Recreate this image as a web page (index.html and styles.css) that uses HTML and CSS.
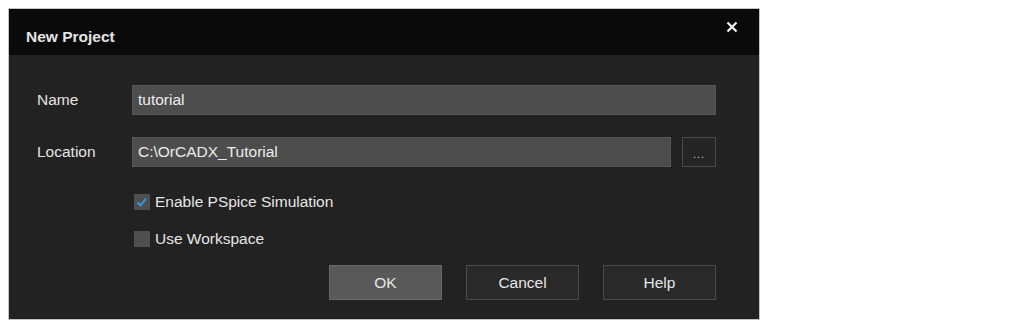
FILE: index.html
```html
<!DOCTYPE html>
<html lang="en">
<head>
    <meta charset="UTF-8">
    <title>New Project</title>
    <link rel="stylesheet" href="styles.css">
</head>
<body>
    <div class="dialog">
        <div class="title-bar">
            <span class="title">New Project</span>
            <span class="close">
                <svg width="12" height="12" viewBox="0 0 12 12">
                    <path d="M1.5 1.5 L10.5 10.5 M10.5 1.5 L1.5 10.5" stroke="#f2f2f2" stroke-width="2.2" fill="none"/>
                </svg>
            </span>
        </div>

        <div class="dialog-body">
            <div class="field">
                <label class="field-label">Name</label>
                <div class="input">tutorial</div>
            </div>
            <div class="field field-location">
                <label class="field-label">Location</label>
                <div class="input-group">
                    <div class="input">C:\OrCADX_Tutorial</div>
                    <button class="browse-btn">...</button>
                </div>
            </div>

            <div class="check-row check-first">
                <span class="checkbox checked">
                    <svg width="16" height="16" viewBox="0 0 16 16">
                        <path d="M3.5 8.5 L6.5 11.5 L12 4.5" stroke="#2f9be8" stroke-width="2" fill="none"/>
                    </svg>
                </span>
                <span class="check-label">Enable PSpice Simulation</span>
            </div>
            <div class="check-row">
                <span class="checkbox"></span>
                <span class="check-label">Use Workspace</span>
            </div>

            <div class="buttons">
                <button class="btn btn-default">OK</button>
                <button class="btn">Cancel</button>
                <button class="btn">Help</button>
            </div>
        </div>
    </div>
</body>
</html>
```

FILE: styles.css
```css
* {
    margin: 0;
    padding: 0;
    box-sizing: border-box;
}

body {
    background: #ffffff;
    font-family: 'Liberation Sans', Arial, sans-serif;
    color: #e6e6e6;
}

.dialog {
    margin: 8px 0 0 8px;
    width: 752px;
    height: 312px;
    border: 1px solid #c4c4c4;
    background: #232222;
}

.title-bar {
    height: 46px;
    background: #0a0a0a;
    display: flex;
    align-items: center;
    justify-content: space-between;
    padding: 0 21px 0 17px;
}

.title {
    font-size: 15.5px;
    font-weight: bold;
    color: #e4e4e4;
    margin-top: 9px;
}

.close {
    display: flex;
    margin-top: -11px;
}

.dialog-body {
    padding: 30px 43px 0 28px;
}

.field {
    display: grid;
    grid-template-columns: 95px 1fr;
    align-items: center;
    height: 30px;
    margin-bottom: 22px;
}

.field-location {
    margin-bottom: 24px;
}

.field-label {
    font-size: 15.5px;
    color: #e4e4e4;
}

.input-group {
    display: flex;
    gap: 11px;
}

.input {
    flex: 1;
    height: 30px;
    background: #4d4d4d;
    border: 1px solid #575757;
    font-size: 15.5px;
    line-height: 28px;
    padding-left: 5px;
    color: #ececec;
}

.browse-btn {
    width: 34px;
    height: 30px;
    background: #262525;
    border: 1px solid #4a4a4a;
    color: #d0d0d0;
    font-family: inherit;
    font-size: 11px;
    letter-spacing: 1px;
    padding-top: 4px;
}

.check-row {
    display: flex;
    align-items: center;
    height: 22px;
    margin-left: 97px;
    margin-bottom: 15px;
}

.checkbox {
    width: 16px;
    height: 16px;
    background: #4f4f4f;
    display: flex;
    margin-right: 5px;
}

.check-label {
    font-size: 15.5px;
    color: #e6e6e6;
}

.buttons {
    display: flex;
    justify-content: flex-end;
    gap: 24px;
    margin-top: 5px;
}

.btn {
    width: 113px;
    height: 35px;
    background: #2a2929;
    border: 1px solid #4a4a4a;
    color: #e6e6e6;
    font-family: inherit;
    font-size: 15.5px;
}

.btn-default {
    background: #595959;
    border-color: #676767;
}
```
